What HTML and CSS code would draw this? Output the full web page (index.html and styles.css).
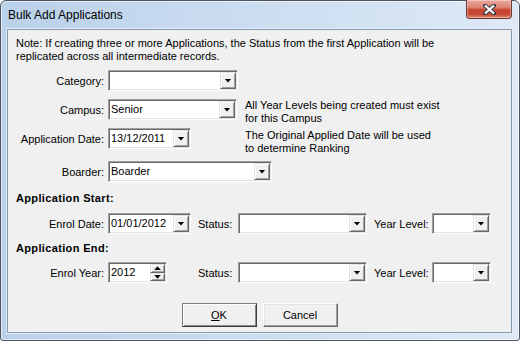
FILE: index.html
```html
<!DOCTYPE html>
<html lang="en">
<head>
	<meta charset="UTF-8">
	<title>Bulk Add Applications</title>
	<link rel="stylesheet" href="styles.css">
</head>
<body>
	<div class="window">
		<div class="titlebar">
			<span class="title">Bulk Add Applications</span>
			<div class="close">
				<svg width="13" height="11" viewBox="0 0 13 11">
					<path d="M2 1.5L11 9.5M11 1.5L2 9.5" stroke="#3a3f47" stroke-width="4" stroke-linecap="square"/>
					<path d="M2 1.5L11 9.5M11 1.5L2 9.5" stroke="#fff" stroke-width="2.2"/>
				</svg>
			</div>
		</div>

		<div class="client">
			<p class="note">Note: If creating three or more Applications, the Status from the first Application will be<br>replicated across all intermediate records.</p>

			<div class="row r-category">
				<span class="lbl">Category:</span>
				<div class="combo w130"><span class="val"></span><span class="drop"></span></div>
			</div>

			<div class="row r-campus">
				<span class="lbl">Campus:</span>
				<div class="cell-wide">
					<div class="combo w129"><span class="val">Senior</span><span class="drop"></span></div>
				</div>
				<p class="hint">All Year Levels being created must exist<br>for this Campus</p>
			</div>

			<div class="row r-appdate">
				<span class="lbl">Application Date:</span>
				<div class="cell-wide">
					<div class="combo w83"><span class="val">13/12/2011</span><span class="drop"></span></div>
				</div>
				<p class="hint hint-date">The Original Applied Date will be used<br>to determine Ranking</p>
			</div>

			<div class="row r-boarder">
				<span class="lbl">Boarder:</span>
				<div class="combo w164"><span class="val">Boarder</span><span class="drop"></span></div>
			</div>

			<h3 class="section s-start">Application Start:</h3>
			<div class="row r-enroldate">
				<span class="lbl">Enrol Date:</span>
				<div class="cell">
					<div class="combo w83"><span class="val">01/01/2012</span><span class="drop"></span></div>
				</div>
				<span class="lbl2">Status:</span>
				<div class="combo w129"><span class="val"></span><span class="drop"></span></div>
				<span class="lbl3">Year Level:</span>
				<div class="combo w59"><span class="val"></span><span class="drop"></span></div>
			</div>

			<h3 class="section s-end">Application End:</h3>
			<div class="row r-enrolyear">
				<span class="lbl">Enrol Year:</span>
				<div class="cell">
					<div class="spin">
						<span class="val">2012</span>
						<span class="spin-btns"><span class="up"></span><span class="down"></span></span>
					</div>
				</div>
				<span class="lbl2">Status:</span>
				<div class="combo w129"><span class="val"></span><span class="drop"></span></div>
				<span class="lbl3">Year Level:</span>
				<div class="combo w59"><span class="val"></span><span class="drop"></span></div>
			</div>

			<div class="buttons">
				<button class="btn default"><u>O</u>K</button>
				<button class="btn">Cancel</button>
			</div>
		</div>
	</div>
</body>
</html>
```

FILE: styles.css
```css
/*reset*/
*{
	margin: 0;
	padding: 0;
	box-sizing: border-box;
}
body{
	background-color: #fff;
	font-family: "Liberation Sans", Arial, sans-serif;
	font-size: 11px;
	color: #000;
}

/*window frame*/
.window{
	width: 520px;
	height: 341px;
	display: flex;
	flex-direction: column;
	padding: 0 7px 7px 6px;
	border: 1px solid #4f5661;
	border-radius: 6px 6px 3px 3px;
	background: linear-gradient(to right, #bad1ea, #d3e2f3 70%, #dde9f6);
	box-shadow: inset 0 0 0 1px rgba(255,255,255,.55);
}
.titlebar{
	height: 28px;
	display: flex;
	justify-content: space-between;
	align-items: flex-start;
}
.title{
	margin: 7px 0 0 1px;
	font-size: 12px;
	line-height: 14px;
}
.close{
	width: 46px;
	height: 19px;
	margin-top: -1px;
	display: flex;
	align-items: center;
	justify-content: center;
	border: 1px solid #6e3530;
	border-top: 0;
	border-radius: 0 0 4px 4px;
	background: linear-gradient(#e9aa9d, #dd8473 40%, #c74532 55%, #c94a36 80%, #dd8a76);
	box-shadow: inset 0 0 0 1px rgba(255,255,255,.35);
}

/*client area*/
.client{
	flex: 1;
	padding: 7px 8px 0 8px;
	border: 1px solid #8498ae;
	background-color: #f0f0f0;
	box-shadow: 0 0 0 1px #e4eef8;
}
.note{
	line-height: 13px;
}
.row{
	display: flex;
	align-items: center;
	height: 21px;
}
.lbl{
	width: 88px;
	margin-right: 4px;
	text-align: right;
	white-space: nowrap;
}
.hint{
	align-self: flex-start;
	line-height: 13px;
	white-space: nowrap;
}
.hint-date{
	margin-top: 1px;
}
.r-category{ margin-top: 7px; }
.r-campus{ margin-top: 8px; }
.r-appdate{ margin-top: 8px; }
.r-boarder{ margin-top: 12px; }
.section{
	height: 14px;
	line-height: 14px;
	font-size: 11px;
	letter-spacing: .35px;
}
.s-start{ margin-top: 9px; }
.r-enroldate{ margin-top: 8px; }
.s-end{ margin-top: 7px; }
.r-enrolyear{ margin-top: 7px; }
.cell{
	width: 90px;
}
.cell-wide{
	width: 137px;
}
.lbl2{
	width: 40px;
}
.lbl3{
	width: 58px;
	margin-left: 7px;
}

/*combo box*/
.combo, .spin{
	height: 21px;
	display: flex;
	align-items: stretch;
	border: 1px solid;
	border-color: #a0a0a0 #fff #fff #a0a0a0;
	background-color: #fff;
	box-shadow: inset 1px 1px #696969, inset -1px -1px #e3e3e3;
	padding: 1px;
}
.w59{ width: 59px; }
.w83{ width: 83px; }
.w129{ width: 129px; }
.w130{ width: 130px; }
.w164{ width: 164px; }
.val{
	flex: 1;
	padding-left: 1px;
	line-height: 17px;
	white-space: nowrap;
	overflow: hidden;
}
.drop, .spin-btns span{
	display: flex;
	align-items: center;
	justify-content: center;
	border: 1px solid;
	border-color: #e3e3e3 #696969 #696969 #e3e3e3;
	background-color: #f0f0f0;
	box-shadow: inset 1px 1px #fff, inset -1px -1px #a0a0a0;
}
.drop{
	width: 16px;
}
.drop::after{
	content: "";
	width: 7px;
	height: 4px;
	background-color: #000;
	clip-path: polygon(0 0, 100% 0, 50% 100%);
}

/*spin box*/
.spin{
	width: 59px;
}
.spin-btns{
	width: 15px;
	display: flex;
	flex-direction: column;
}
.spin-btns span{
	flex: 1;
}
.spin-btns .up::after, .spin-btns .down::after{
	content: "";
	width: 7px;
	height: 4px;
	background-color: #000;
}
.spin-btns .up::after{
	clip-path: polygon(50% 0, 100% 100%, 0 100%);
}
.spin-btns .down::after{
	clip-path: polygon(0 0, 100% 0, 50% 100%);
}

/*buttons*/
.buttons{
	display: flex;
	justify-content: center;
	gap: 6px;
	margin-top: 20px;
}
.btn{
	width: 75px;
	height: 24px;
	font-family: "Liberation Sans", Arial, sans-serif;
	font-size: 11px;
	color: #000;
	border: 1px solid;
	border-color: #fff #696969 #696969 #fff;
	background-color: #f0f0f0;
	box-shadow: inset -1px -1px #a0a0a0, inset 1px 1px #e3e3e3;
}
.btn.default{
	border-color: #7d7d7d #3c3c3c #3c3c3c #7d7d7d;
	box-shadow: inset 1px 1px #fff, inset -1px -1px #8a8a8a;
}
```
